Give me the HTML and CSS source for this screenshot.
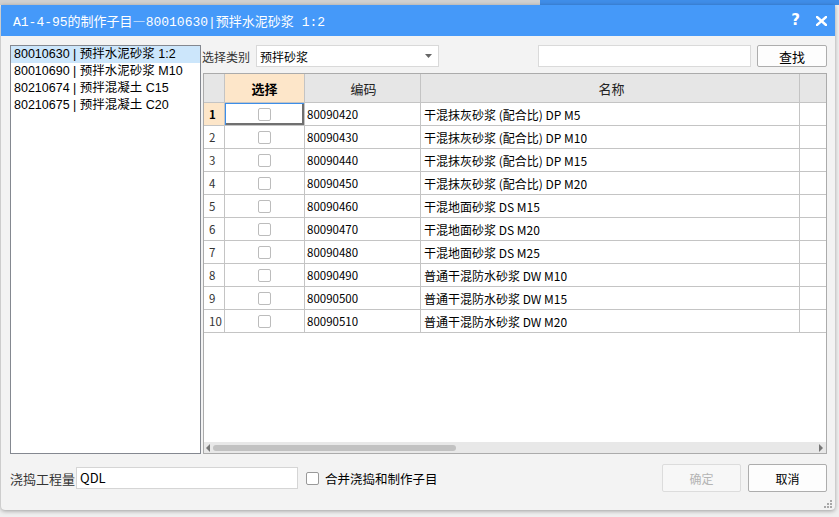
FILE: index.html
```html
<!DOCTYPE html>
<html lang="zh">
<head>
<meta charset="utf-8">
<title>制作子目</title>
<link rel="stylesheet" href="styles.css">
</head>
<body>
<div class="backdrop-top"><div class="bt-left"></div><div class="bt-right"></div></div>
<div class="dialog">
  <div class="titlebar">
    <span class="title">A1-4-95的制作子目<span class="cjk">—</span>80010630|预拌水泥砂浆 1:2</span>
    <span class="tb-help">?</span>
    <svg class="tb-close" width="11" height="10" viewBox="0 0 11 10"><path d="M1 1 L10 9 M10 1 L1 9" stroke="#fff" stroke-width="2.4" stroke-linecap="square"/></svg>
  </div>
  <div class="content">
    <div class="main">
      <ul class="list">
        <li class="sel">80010630 | 预拌水泥砂浆 1:2</li>
        <li>80010690 | 预拌水泥砂浆 M10</li>
        <li>80210674 | 预拌混凝土 C15</li>
        <li>80210675 | 预拌混凝土 C20</li>
      </ul>
      <div class="right">
        <div class="toolbar">
          <span class="tb-label">选择类别</span>
          <div class="select"><span>预拌砂浆</span><svg width="7" height="4" viewBox="0 0 7 4"><path d="M0 0 H7 L3.5 4 Z" fill="#666"/></svg></div>
          <div class="spacer"></div>
          <div class="search"></div>
          <button class="btn find">查找</button>
        </div>
        <div class="grid">
          <div class="row head">
            <div class="c num"></div>
            <div class="c chk hl"><b>选择</b></div>
            <div class="c code">编码</div>
            <div class="c name">名称</div>
            <div class="c last"></div>
          </div>
          <div class="row"><div class="c num cur">1</div><div class="c chk focus"><span class="box"></span></div><div class="c code">80090420</div><div class="c name">干混抹灰砂浆 (配合比) DP M5</div><div class="c last"></div></div>
          <div class="row"><div class="c num">2</div><div class="c chk"><span class="box"></span></div><div class="c code">80090430</div><div class="c name">干混抹灰砂浆 (配合比) DP M10</div><div class="c last"></div></div>
          <div class="row"><div class="c num">3</div><div class="c chk"><span class="box"></span></div><div class="c code">80090440</div><div class="c name">干混抹灰砂浆 (配合比) DP M15</div><div class="c last"></div></div>
          <div class="row"><div class="c num">4</div><div class="c chk"><span class="box"></span></div><div class="c code">80090450</div><div class="c name">干混抹灰砂浆 (配合比) DP M20</div><div class="c last"></div></div>
          <div class="row"><div class="c num">5</div><div class="c chk"><span class="box"></span></div><div class="c code">80090460</div><div class="c name">干混地面砂浆 DS M15</div><div class="c last"></div></div>
          <div class="row"><div class="c num">6</div><div class="c chk"><span class="box"></span></div><div class="c code">80090470</div><div class="c name">干混地面砂浆 DS M20</div><div class="c last"></div></div>
          <div class="row"><div class="c num">7</div><div class="c chk"><span class="box"></span></div><div class="c code">80090480</div><div class="c name">干混地面砂浆 DS M25</div><div class="c last"></div></div>
          <div class="row"><div class="c num">8</div><div class="c chk"><span class="box"></span></div><div class="c code">80090490</div><div class="c name">普通干混防水砂浆 DW M10</div><div class="c last"></div></div>
          <div class="row"><div class="c num">9</div><div class="c chk"><span class="box"></span></div><div class="c code">80090500</div><div class="c name">普通干混防水砂浆 DW M15</div><div class="c last"></div></div>
          <div class="row"><div class="c num">10</div><div class="c chk"><span class="box"></span></div><div class="c code">80090510</div><div class="c name">普通干混防水砂浆 DW M20</div><div class="c last"></div></div>
          <div class="filler"></div>
          <div class="hscroll">
            <svg width="4" height="8" viewBox="0 0 4 8"><path d="M4 0 V8 L0 4 Z" fill="#777"/></svg>
            <div class="thumb"></div>
            <div class="spacer"></div>
            <svg width="4" height="8" viewBox="0 0 4 8"><path d="M0 0 V8 L4 4 Z" fill="#777"/></svg>
          </div>
        </div>
      </div>
    </div>
    <div class="bottom">
      <span class="b-label">浇捣工程量</span>
      <div class="qty">QDL</div>
      <span class="cbox"></span>
      <span class="cb-label">合并浇捣和制作子目</span>
      <div class="spacer"></div>
      <button class="btn act disabled">确定</button>
      <button class="btn act">取消</button>
    </div>
  </div>
  <svg class="grip" width="8" height="8" viewBox="0 0 8 8"><g fill="#a8a8a8"><rect x="6" y="0" width="2" height="2"/><rect x="3" y="3" width="2" height="2"/><rect x="6" y="3" width="2" height="2"/><rect x="0" y="6" width="2" height="2"/><rect x="3" y="6" width="2" height="2"/><rect x="6" y="6" width="2" height="2"/></g></svg>
</div>
</body>
</html>
```
FILE: styles.css
```css
body {
  margin: 0;
  width: 839px;
  height: 517px;
  overflow: hidden;
  background: #efefef;
  font-family: "Noto Sans CJK SC", sans-serif;
  color: #000;
}
.backdrop-top { display: flex; height: 5px; }
.bt-left { width: 540px; background: #d0d0d0; }
.bt-right { flex: 1; background: #3f8de8; }

.dialog {
  position: relative;
  margin-left: 1px;
  width: 834px;
  height: 505px;
  background: #f3f3f3;
  border-radius: 0 0 4px 4px;
  box-shadow: 0 1px 4px rgba(0,0,0,0.35);
  display: flex;
  flex-direction: column;
}
.titlebar {
  height: 31px;
  background: #4599f9;
  display: flex;
  align-items: center;
  padding: 0 8px 0 12px;
  color: #fff;
}
.title {
  flex: 1;
  font-family: "Liberation Mono", "Noto Sans CJK SC", monospace;
  font-size: 13px;
  white-space: nowrap;
}
.cjk { font-family: "Noto Sans CJK SC", sans-serif; }
.tb-help { font-family: "DejaVu Sans", sans-serif; font-weight: bold; font-size: 15px; margin-right: 16px; line-height: 1; }
.tb-close { display: block; }

.content {
  flex: 1;
  padding: 9px 8px 18px 9px;
  display: flex;
  flex-direction: column;
  gap: 10px;
}
.main { display: flex; height: 409px; gap: 1px; }
.list {
  width: 191px;
  box-sizing: border-box;
  border: 1px solid #848890;
  background: #fff;
  margin: 0;
  padding: 0;
  list-style: none;
  font-family: "Liberation Sans", "Noto Sans CJK SC", sans-serif;
  font-size: 12.5px;
}
.list li { height: 17px; line-height: 17px; padding-left: 3px; white-space: nowrap; }
.list li.sel { background: #cce6fb; }

.right { flex: 1; display: flex; flex-direction: column; gap: 6px; }
.toolbar { display: flex; align-items: center; height: 22px; }
.tb-label { font-size: 12px; color: #333; }
.select {
  margin-left: 6px;
  width: 183px;
  height: 22px;
  box-sizing: border-box;
  border: 1px solid #d9d9d9;
  background: #fff;
  display: flex;
  align-items: center;
  justify-content: space-between;
  padding: 0 6px 0 3px;
  font-size: 12px;
}
.spacer { flex: 1; }
.search {
  width: 213px;
  height: 22px;
  box-sizing: border-box;
  border: 1px solid #dadada;
  background: #fff;
}
.btn {
  box-sizing: border-box;
  border: 1px solid #adadad;
  border-radius: 2px;
  background: #fdfdfd;
  font-family: "Noto Sans CJK SC", sans-serif;
  font-size: 13px;
  color: #000;
  padding: 0;
}
.find { margin-left: 6px; width: 70px; height: 22px; }

.grid {
  flex: 1;
  margin-left: 1px;
  border: 1px solid #ababab;
  background: #fff;
  display: flex;
  flex-direction: column;
}
.row {
  display: grid;
  grid-template-columns: 21px 80px 116px 379px 26px;
  height: 23px;
}
.row.head { height: 29px; }
.c {
  box-sizing: border-box;
  border-right: 1px solid #c4c4c4;
  border-bottom: 1px solid #c4c4c4;
  display: flex;
  align-items: center;
  font-size: 12px;
  white-space: nowrap;
  overflow: hidden;
}
.c.last { border-right: none; }
.head .c { background: #e6e6e6; justify-content: center; font-size: 13px; color: #222; }
.head .c.hl { background: #fde6c9; color: #000; }
.num { padding-left: 5px; color: #333; font-size: 11.5px; }
.num.cur { background: #fde6c9; font-weight: bold; color: #000; }
.chk { justify-content: center; }
.focus { box-shadow: inset 1px 1px 0 #3d8ee8, inset -2px -2px 0 #707070; }
.box {
  width: 13px;
  height: 13px;
  box-sizing: border-box;
  border: 1px solid #bcbcbc;
  border-radius: 2px;
  background: #fff;
}
.code { padding-left: 2px; font-size: 11.5px; }
.name { padding-left: 3px; }
.filler { flex: 1; }
.hscroll {
  height: 11px;
  background: #e8e8e8;
  display: flex;
  align-items: center;
  padding: 0 3px 0 2px;
}
.thumb {
  margin-left: 3px;
  width: 243px;
  height: 6px;
  border-radius: 3px;
  background: #c2c2c2;
}

.bottom { display: flex; align-items: center; height: 28px; }
.b-label { font-size: 13px; color: #333; width: 66px; }
.qty {
  width: 222px;
  height: 22px;
  box-sizing: border-box;
  border: 1px solid #d5d5d5;
  background: #fff;
  font-size: 13px;
  line-height: 20px;
  padding-left: 3px;
}
.cbox {
  margin-left: 8px;
  width: 13px;
  height: 13px;
  box-sizing: border-box;
  border: 1px solid #999;
  border-radius: 2px;
  background: #fff;
}
.cb-label { margin-left: 6px; font-size: 12.5px; }
.act { width: 79px; height: 28px; font-size: 12px; }
.act + .act { margin-left: 7px; }
.act.disabled { color: #b4b4b4; border-color: #dcdcdc; background: #f7f7f7; }

.grip { position: absolute; right: 3px; bottom: 2px; }
```
